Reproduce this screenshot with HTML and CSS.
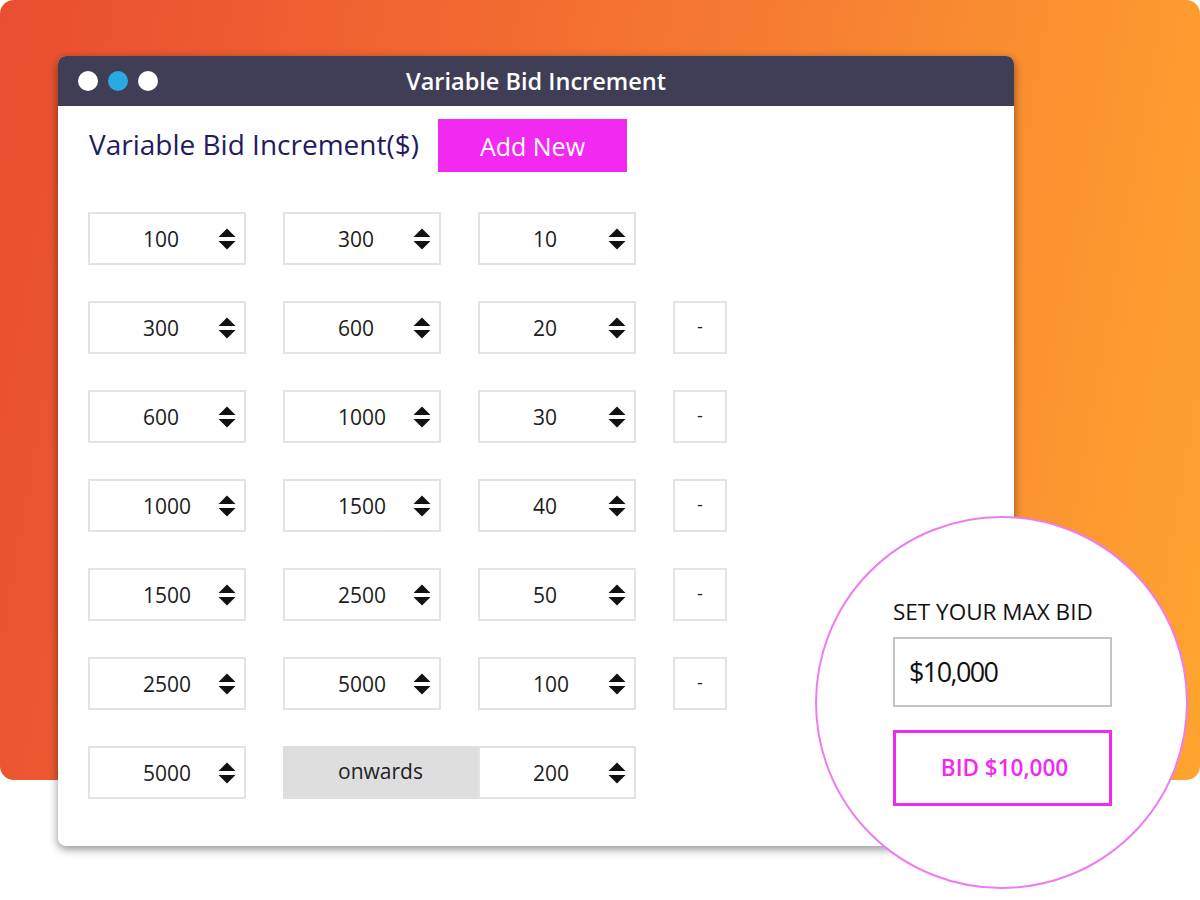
FILE: index.html
```html
<!DOCTYPE html>
<html>
  <head>
    <title>Variable Bid Increment</title>
    <meta name="viewport" content="width=device-width, initial-scale=1" />
    <link rel="stylesheet" href="styles.css">
  </head>
  <body>
    <div class="stage">
      <div class="backdrop">
        <div class="window">
          <div class="titlebar">
            <div class="dots">
              <span class="dot"></span>
              <span class="dot blue"></span>
              <span class="dot"></span>
            </div>
            <div class="title">Variable Bid Increment</div>
          </div>

          <div class="content">
            <div class="head">
              <h1>Variable Bid Increment($)</h1>
              <button class="add-new" type="button">Add New</button>
            </div>

            <div class="rows" id="rows"></div>
          </div>
        </div>
      </div>

      <!-- zoomed-in detail of the bidding box -->
      <div class="lens">
        <div class="max-bid">
          <label for="max-bid">SET YOUR MAX BID</label>
          <input id="max-bid" type="text" value="$10,000" />
          <button class="bid" type="button">BID $10,000</button>
        </div>
      </div>
    </div>

    <script>
      // ranges: from, to, increment
      const ranges = [
        [100, 300, 10],
        [300, 600, 20],
        [600, 1000, 30],
        [1000, 1500, 40],
        [1500, 2500, 50],
        [2500, 5000, 100]
      ];

      const spinner = `
        <svg class="spin" width="18" height="22" viewBox="0 0 18 22">
          <path d="M9 0.5 L17.5 9 H0.5 Z" />
          <path d="M0.5 13 H17.5 L9 21.5 Z" />
        </svg>`;

      function field(value) {
        return `<div class="field"><span>${value}</span>${spinner}</div>`;
      }

      const rows = document.getElementById('rows');

      ranges.forEach((r, i) => {
        const row = document.createElement('div');
        row.className = 'row';
        row.innerHTML = field(r[0]) + field(r[1]) + field(r[2]) +
          (i > 0 ? '<div class="remove">-</div>' : '');
        rows.appendChild(row);
      });

      // last row has no upper limit
      const last = document.createElement('div');
      last.className = 'row last';
      last.innerHTML = field(5000) + '<div class="onwards">onwards</div>' + field(200);
      rows.appendChild(last);
    </script>
  </body>
</html>
```

FILE: styles.css
```css
body {
  margin: 0;
  font-family: "Open Sans", "Noto Sans", Arial, sans-serif;
  background-color: #fff;
}

.stage {
  position: relative;
  width: 1200px;
  height: 900px;
  overflow: hidden;
}

.backdrop {
  height: 780px;
  box-sizing: border-box;
  padding: 56px 0 0 58px;
  border-radius: 14px;
  background: linear-gradient(100deg, #ea4d30 0%, #f47532 50%, #ffa42f 100%);
}

.window {
  width: 956px;
  height: 790px;
  background-color: #fff;
  border-radius: 8px;
  box-shadow: 0 3px 10px rgba(0, 0, 0, 0.45);
}

.titlebar {
  height: 50px;
  display: grid;
  grid-template-columns: 1fr auto 1fr;
  align-items: center;
  background-color: #403d56;
  border-radius: 8px 8px 0 0;
}

.dots {
  display: flex;
  gap: 10px;
  padding-left: 20px;
}

.dot {
  width: 20px;
  height: 20px;
  border-radius: 50%;
  background-color: #fff;
}

.dot.blue {
  background-color: #29abe2;
}

.title {
  color: #fff;
  font-size: 23.5px;
  font-weight: 600;
  padding-bottom: 1px;
}

.content {
  padding: 13px 0 0 30px;
}

.head {
  display: flex;
  align-items: center;
  gap: 19px;
  padding-left: 1px;
}

.head h1 {
  margin: 0 0 4px;
  font-size: 28px;
  font-weight: 500;
  color: #221b5f;
}

.add-new {
  width: 189px;
  height: 53px;
  border: none;
  background-color: #f229f0;
  color: #fff;
  font-family: inherit;
  font-size: 25px;
  padding: 0;
}

.rows {
  display: grid;
  row-gap: 36px;
  margin-top: 40px;
}

.row {
  display: grid;
  grid-template-columns: 158px 158px 158px 54px;
  column-gap: 37px;
  height: 53px;
}

.field {
  display: flex;
  align-items: center;
  box-sizing: border-box;
  padding: 0 8px 0 53px;
  border: 2px solid #e3e3e3;
  font-size: 21px;
  color: #1c1c1c;
}

.spin {
  margin-left: auto;
  fill: #111;
}

.remove {
  display: flex;
  align-items: center;
  justify-content: center;
  box-sizing: border-box;
  border: 2px solid #e3e3e3;
  font-size: 18px;
  color: #222;
  padding-bottom: 4px;
}

.onwards {
  display: flex;
  align-items: center;
  justify-content: center;
  margin-right: -37px;
  background-color: #dedede;
  font-size: 21px;
  color: #222;
  padding-bottom: 4px;
}

.lens {
  position: absolute;
  left: 815px;
  top: 516px;
  width: 373px;
  height: 373px;
  box-sizing: border-box;
  border: 2px solid #ee7cef;
  border-radius: 50%;
  background-color: #fff;
  display: flex;
  align-items: center;
  justify-content: center;
}

.max-bid {
  display: flex;
  flex-direction: column;
  width: 219px;
  padding: 0 0 4px 2px;
}

.max-bid label {
  font-size: 22.5px;
  color: #111;
  margin-bottom: 10px;
}

.max-bid input {
  height: 70px;
  box-sizing: border-box;
  border: 2px solid #c4c4c4;
  padding: 0 0 0 14px;
  font-family: inherit;
  font-size: 27px;
  letter-spacing: -1.6px;
  color: #111;
  outline: none;
}

.bid {
  height: 76px;
  margin-top: 23px;
  border: 3px solid #f229f0;
  background-color: #fff;
  color: #f229f0;
  font-family: inherit;
  font-size: 22.5px;
  font-weight: 600;
  padding: 0 0 0 4px;
}
```
